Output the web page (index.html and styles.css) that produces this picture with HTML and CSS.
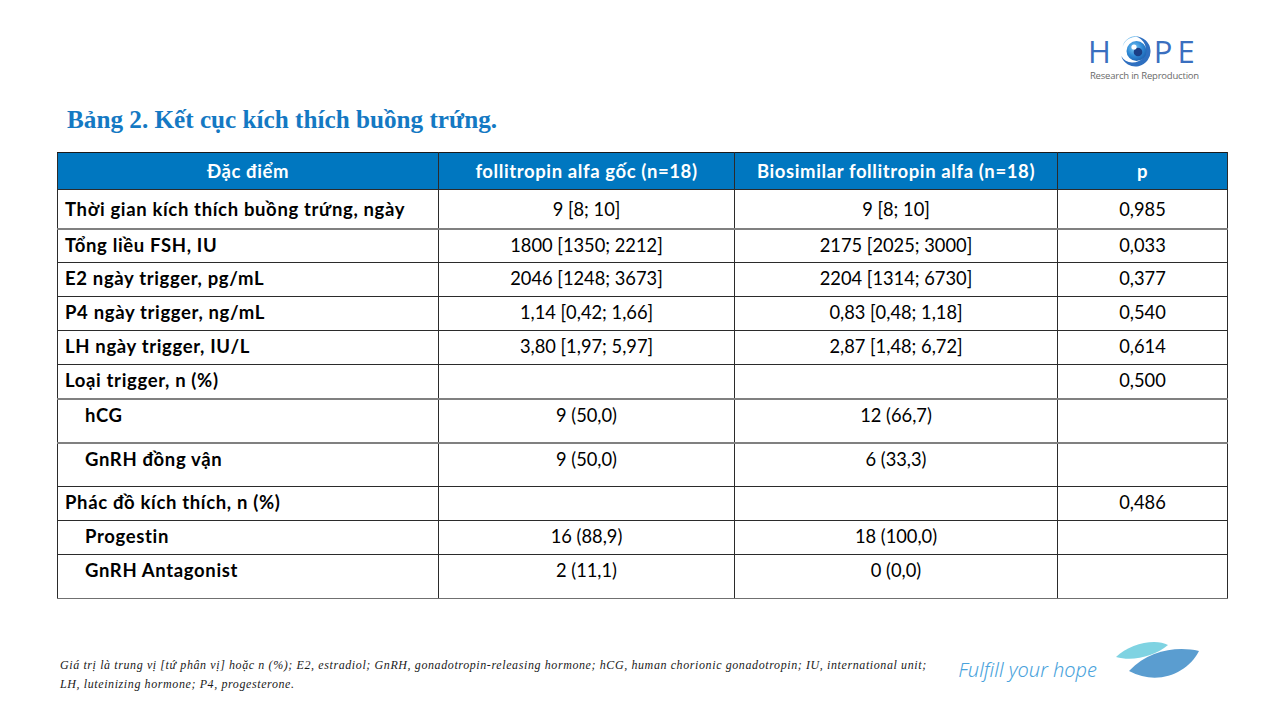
FILE: index.html
```html
<!DOCTYPE html>
<html lang="vi">
<head>
<meta charset="utf-8">
<title>Bảng 2</title>
<link rel="stylesheet" href="styles.css">
</head>
<body>
<div class="slide">
  <header class="top">
    <div class="hope">
      <div class="hope-word">
        <span class="hope-l hope-h">H</span>
        <svg class="hope-eye" width="33" height="33" viewBox="0 0 33 33">
          <defs>
            <radialGradient id="iris" cx="0.4" cy="0.35" r="0.7">
              <stop offset="0" stop-color="#7fcaf4"/>
              <stop offset="0.55" stop-color="#2f8ad6"/>
              <stop offset="1" stop-color="#1d5fae"/>
            </radialGradient>
          </defs>
          <path d="M16.5 1.5 A15 15 0 1 1 2.2 21 A13.2 13.2 0 1 0 16.5 1.5 Z" fill="#2e6fc0"/>
          <path d="M3.5 12 A14.5 14.5 0 0 1 21 2.2 A13 13 0 0 0 3.5 12 Z" fill="#6ab7ea"/>
          <circle cx="17.5" cy="16" r="10" fill="url(#iris)"/>
          <circle cx="19" cy="17" r="4.3" fill="#1b3f86"/>
          <circle cx="15" cy="12" r="2.6" fill="#ffffff"/>
        </svg>
        <span class="hope-l hope-pe">PE</span>
      </div>
      <div class="hope-sub">Research in Reproduction</div>
    </div>
  </header>

  <h1 class="title">Bảng 2. Kết cục kích thích buồng trứng.</h1>

  <table class="data">
    <colgroup>
      <col class="c1"><col class="c2"><col class="c3"><col class="c4">
    </colgroup>
    <thead>
      <tr>
        <th>Đặc điểm</th>
        <th>follitropin alfa gốc (n=18)</th>
        <th>Biosimilar follitropin alfa (n=18)</th>
        <th>p</th>
      </tr>
    </thead>
    <tbody>
      <tr class="r1"><td class="lbl">Thời gian kích thích buồng trứng, ngày</td><td>9 [8; 10]</td><td>9 [8; 10]</td><td>0,985</td></tr>
      <tr class="r gtop"><td class="lbl">Tổng liều FSH, IU</td><td>1800 [1350; 2212]</td><td>2175 [2025; 3000]</td><td>0,033</td></tr>
      <tr class="r"><td class="lbl">E2 ngày trigger, pg/mL</td><td>2046 [1248; 3673]</td><td>2204 [1314; 6730]</td><td>0,377</td></tr>
      <tr class="r"><td class="lbl">P4 ngày trigger, ng/mL</td><td>1,14 [0,42; 1,66]</td><td>0,83 [0,48; 1,18]</td><td>0,540</td></tr>
      <tr class="r"><td class="lbl">LH ngày trigger, IU/L</td><td>3,80 [1,97; 5,97]</td><td>2,87 [1,48; 6,72]</td><td>0,614</td></tr>
      <tr class="r"><td class="lbl">Loại trigger, n (%)</td><td></td><td></td><td>0,500</td></tr>
      <tr class="tall gtop"><td class="lbl sub">hCG</td><td>9 (50,0)</td><td>12 (66,7)</td><td></td></tr>
      <tr class="tall gtop"><td class="lbl sub">GnRH đồng vận</td><td>9 (50,0)</td><td>6 (33,3)</td><td></td></tr>
      <tr class="r"><td class="lbl">Phác đồ kích thích, n (%)</td><td></td><td></td><td>0,486</td></tr>
      <tr class="r"><td class="lbl sub">Progestin</td><td>16 (88,9)</td><td>18 (100,0)</td><td></td></tr>
      <tr class="tall last"><td class="lbl sub">GnRH Antagonist</td><td>2 (11,1)</td><td>0 (0,0)</td><td></td></tr>
    </tbody>
  </table>

  <footer class="foot">
    <p class="note">Giá trị là trung vị [tứ phân vị] hoặc n (%); E2, estradiol; GnRH, gonadotropin-releasing hormone; hCG, human chorionic gonadotropin; IU, international unit;<br>LH, luteinizing hormone; P4, progesterone.</p>
    <div class="brand">
      <span class="slogan">Fulfill your hope</span>
      <svg class="leaves" width="86" height="44" viewBox="0 0 86 44">
        <path d="M1 17 C14 4 40 -2 53 5 C40 16 18 22 1 17 Z" fill="#7fd3e2"/>
        <path d="M14 31 C34 10 62 6 84 11 C72 34 42 46 14 31 Z" fill="#5a9dd0"/>
      </svg>
    </div>
  </footer>
</div>
</body>
</html>
```

FILE: styles.css
```css
html, body {
  margin: 0;
  padding: 0;
  background: #ffffff;
}

body {
  width: 1280px;
  height: 720px;
  overflow: hidden;
}

.slide {
  width: 1280px;
  height: 720px;
  display: flex;
  flex-direction: column;
}

.top {
  display: flex;
  justify-content: flex-end;
  padding: 34px 81px 0 0;
  height: 66px;
}

.hope {
  display: flex;
  flex-direction: column;
  align-items: flex-start;
}

.hope-word {
  display: flex;
  align-items: center;
  height: 34px;
}

.hope-l {
  font-family: "Open Sans", "Liberation Sans", sans-serif;
  font-weight: 400;
  font-size: 31px;
  line-height: 34px;
  color: #3a6fbf;
}

.hope-h {
  margin-left: -2px;
  margin-right: 8px;
}

.hope-pe {
  letter-spacing: 5px;
  margin-left: 2px;
  margin-right: -5px;
}

.hope-sub {
  font-family: "Open Sans", "Liberation Sans", sans-serif;
  font-size: 9.5px;
  color: #6a6a6a;
  line-height: 12px;
  margin-top: 2px;
  letter-spacing: -0.2px;
}

.title {
  margin: 0 0 12px 67px;
  font-family: "Liberation Serif", "DejaVu Serif", serif;
  font-weight: 700;
  font-size: 25.2px;
  line-height: 40px;
  height: 40px;
  color: #1479c3;
}

.data {
  margin-left: 57px;
  width: 1170px;
  border-collapse: collapse;
  table-layout: fixed;
  font-family: "Lato", "Liberation Sans", sans-serif;
  font-size: 18.3px;
  color: #000000;
}

.c1 { width: 381px; }
.c2 { width: 296px; }
.c3 { width: 323px; }
.c4 { width: 170px; }

.data th {
  background: #0077c0;
  color: #ffffff;
  font-weight: 700;
  font-size: 18.5px;
  letter-spacing: 0.6px;
  height: 36px;
  padding: 0 6px;
  text-align: center;
  vertical-align: middle;
  border: 1px solid #2b2b2b;
  border-top-color: #1a1a1a;
}

.data td {
  border: 1px solid #2b2b2b;
  text-align: center;
  vertical-align: top;
  padding: 4px 6px 0 6px;
  line-height: 22px;
}

.data td.lbl {
  text-align: left;
  font-weight: 700;
  font-size: 18.5px;
  letter-spacing: 0.65px;
  padding-left: 7px;
}

.data td.sub {
  padding-left: 27px;
}

.data tr.r1 td {
  height: 39px;
  padding-top: 8px;
  box-sizing: border-box;
}

.data tr.r td {
  height: 34px;
  box-sizing: border-box;
}

.data tr.tall td {
  height: 44px;
  box-sizing: border-box;
}

.data tr.gtop td {
  border-top: 2px solid #808080;
}

.data tr.last td {
  border-bottom: 1px solid #707070;
}

.foot {
  margin-top: auto;
  display: flex;
  align-items: flex-end;
  justify-content: space-between;
  padding: 0 79px 26px 60px;
}

.note {
  margin: 0;
  width: 880px;
  font-family: "Liberation Serif", "DejaVu Serif", serif;
  font-style: italic;
  font-size: 12px;
  letter-spacing: 0.6px;
  line-height: 19px;
  color: #1a1a1a;
  white-space: nowrap;
}

.brand {
  display: flex;
  align-items: flex-end;
  gap: 18px;
}

.slogan {
  font-family: "Noto Sans", "DejaVu Sans", sans-serif;
  font-style: italic;
  font-weight: 300;
  font-size: 20px;
  color: #4aa3dc;
  line-height: 24px;
  margin-bottom: 12px;
}

.leaves {
  display: block;
  margin-bottom: 10px;
}
```
